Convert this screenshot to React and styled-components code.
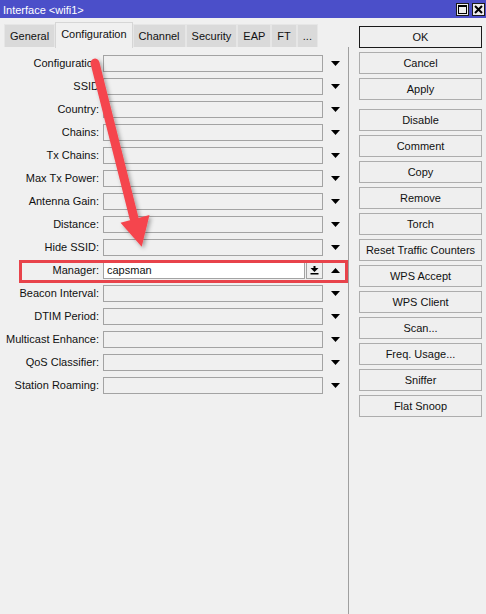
import React from "react";
import styled, { createGlobalStyle } from "styled-components";

const Global = createGlobalStyle`
  html, body { margin: 0; padding: 0; background: #f0f0f0; }
  body { font-family: "Liberation Sans", Arial, sans-serif; font-size: 11px; color: #111; }
  * { box-sizing: border-box; }
`;

const Window = styled.div`
  position: relative;
  width: 486px;
  height: 614px;
  display: flex;
  flex-direction: column;
  background: #f0f0f0;
  overflow: hidden;
`;

const TitleBar = styled.div`
  height: 18px;
  background: #4b4fc9;
  display: flex;
  align-items: center;
  justify-content: space-between;
  padding: 0 1px 0 3px;
`;

const Title = styled.div`
  color: #fff;
  font-size: 11px;
  padding-top: 1px;
`;

const TitleButtons = styled.div`
  display: flex;
  gap: 3px;
`;

const TitleBtn = styled.div`
  width: 13px;
  height: 13px;
  border: 1px solid #1a1a1a;
  background: #ececec;
  display: flex;
  align-items: center;
  justify-content: center;
`;

const Body = styled.div`
  flex: 1;
  display: flex;
`;

const LeftPane = styled.div`
  width: 349px;
  display: flex;
  flex-direction: column;
`;

const TabStrip = styled.div`
  height: 29px;
  display: flex;
  align-items: flex-end;
  padding-left: 4px;
`;

const Tab = styled.div`
  height: ${(p) => (p.$active ? "26px" : "23px")};
  margin-bottom: ${(p) => (p.$active ? "-1px" : "0")};
  padding: 0 5px;
  display: flex;
  align-items: center;
  justify-content: center;
  white-space: nowrap;
  background: ${(p) => (p.$active ? "#f0f0f0" : "#dadada")};
  border: 1px solid ${(p) => (p.$active ? "#d6d6d6" : "#e6e6e6")};
  border-bottom: none;
  padding-bottom: ${(p) => (p.$active ? "3px" : "0")};
  position: relative;
  z-index: ${(p) => (p.$active ? 1 : 0)};
`;

const Panel = styled.div`
  flex: 1;
  border-right: 1px solid #9f9f9f;
  padding-top: 8px;
  display: flex;
  flex-direction: column;
  gap: 6px;
`;

const Row = styled.div`
  position: relative;
  height: 17px;
  display: grid;
  grid-template-columns: 99px 220px 20px;
  column-gap: 4px;
  align-items: center;
`;

const Label = styled.div`
  text-align: right;
  white-space: nowrap;
  line-height: 17px;
`;

const Field = styled.div`
  height: 17px;
  border: 1px solid #a3a3a3;
  background: ${(p) => (p.$white ? "#fff" : "#f0f0f0")};
  padding-left: 3px;
  line-height: 15px;
`;

const FieldGroup = styled.div`
  display: flex;
  gap: 1px;
  height: 17px;
`;

const SmallBtn = styled.div`
  width: 17px;
  height: 17px;
  border: 1px solid #a3a3a3;
  background: #f0f0f0;
  display: flex;
  align-items: center;
  justify-content: center;
`;

const ArrowCell = styled.div`
  display: flex;
  align-items: center;
  justify-content: center;
  margin-left: -4px;
`;

const Highlight = styled.div`
  position: absolute;
  left: 19px;
  top: -2px;
  width: 329px;
  height: 23px;
  border: 3px solid #e8434b;
  pointer-events: none;
`;

const RightPane = styled.div`
  flex: 1;
  padding: 8px 0 0 10px;
  display: flex;
  flex-direction: column;
  gap: 4px;
`;

const Button = styled.div`
  width: 123px;
  height: 22px;
  border: 1px solid ${(p) => (p.$default ? "#1a1a1a" : "#adadad")};
  background: #efefef;
  display: flex;
  align-items: center;
  justify-content: center;
  white-space: nowrap;
  margin-bottom: ${(p) => (p.$sep ? "5px" : "0")};
`;

const Overlay = styled.svg`
  position: absolute;
  left: 0;
  top: 0;
  pointer-events: none;
`;

const Down = () => (
  <svg width="9" height="5" viewBox="0 0 9 5">
    <polygon points="0,0 9,0 4.5,5" fill="#000" />
  </svg>
);

const Up = () => (
  <svg width="9" height="5" viewBox="0 0 9 5">
    <polygon points="0,5 9,5 4.5,0" fill="#000" />
  </svg>
);

const DownBar = () => (
  <svg width="9" height="9" viewBox="0 0 9 9">
    <rect x="3.5" y="0" width="2" height="2" fill="#000" />
    <polygon points="0.5,2 8.5,2 4.5,6" fill="#000" />
    <rect x="0.5" y="7" width="8" height="1.5" fill="#000" />
  </svg>
);

const fields = [
  "Configuration",
  "SSID",
  "Country:",
  "Chains:",
  "Tx Chains:",
  "Max Tx Power:",
  "Antenna Gain:",
  "Distance:",
  "Hide SSID:",
  "Manager:",
  "Beacon Interval:",
  "DTIM Period:",
  "Multicast Enhance:",
  "QoS Classifier:",
  "Station Roaming:",
];

const tabs = [
  { name: "General" },
  { name: "Configuration", active: true },
  { name: "Channel" },
  { name: "Security" },
  { name: "EAP" },
  { name: "FT" },
  { name: "..." },
];

const buttons = [
  { t: "OK", d: true },
  { t: "Cancel" },
  { t: "Apply", sep: true },
  { t: "Disable" },
  { t: "Comment" },
  { t: "Copy" },
  { t: "Remove" },
  { t: "Torch" },
  { t: "Reset Traffic Counters" },
  { t: "WPS Accept" },
  { t: "WPS Client" },
  { t: "Scan..." },
  { t: "Freq. Usage..." },
  { t: "Sniffer" },
  { t: "Flat Snoop" },
];

export default function App() {
  return (
    <>
      <Global />
      <Window>
        <TitleBar>
          <Title>Interface &lt;wifi1&gt;</Title>
          <TitleButtons>
            <TitleBtn>
              <svg width="9" height="9" viewBox="0 0 9 9">
                <rect x="0.5" y="0.5" width="8" height="8" fill="none" stroke="#000" strokeWidth="1" />
                <rect x="0" y="0" width="9" height="2" fill="#000" />
              </svg>
            </TitleBtn>
            <TitleBtn>
              <svg width="9" height="9" viewBox="0 0 9 9">
                <path d="M1 1 L8 8 M8 1 L1 8" stroke="#000" strokeWidth="2" />
              </svg>
            </TitleBtn>
          </TitleButtons>
        </TitleBar>
        <Body>
          <LeftPane>
            <TabStrip>
              {tabs.map((t) => (
                <Tab key={t.name} $active={t.active}>
                  {t.name}
                </Tab>
              ))}
            </TabStrip>
            <Panel>
              {fields.map((f) =>
                f === "Manager:" ? (
                  <Row key={f}>
                    <Label>{f}</Label>
                    <FieldGroup>
                      <Field $white style={{ flex: 1 }}>capsman</Field>
                      <SmallBtn>
                        <DownBar />
                      </SmallBtn>
                    </FieldGroup>
                    <ArrowCell>
                      <Up />
                    </ArrowCell>
                    <Highlight />
                  </Row>
                ) : (
                  <Row key={f}>
                    <Label>{f}</Label>
                    <Field />
                    <ArrowCell>
                      <Down />
                    </ArrowCell>
                  </Row>
                )
              )}
            </Panel>
          </LeftPane>
          <RightPane>
            {buttons.map((b) => (
              <Button key={b.t} $default={b.d} $sep={b.sep}>
                {b.t}
              </Button>
            ))}
          </RightPane>
        </Body>
        <Overlay width="486" height="614" viewBox="0 0 486 614">
          <defs>
            <filter id="sh" x="-50%" y="-50%" width="200%" height="200%">
              <feDropShadow dx="2" dy="2" stdDeviation="2" floodColor="#000" floodOpacity="0.35" />
            </filter>
          </defs>
          <g filter="url(#sh)" fill="#f5454d">
            <line x1="95" y1="63" x2="134" y2="218" stroke="#f5454d" strokeWidth="9" strokeLinecap="round" />
            <polygon points="120.5,222.7 149.5,215 141.7,246.7" />
          </g>
        </Overlay>
      </Window>
    </>
  );
}
